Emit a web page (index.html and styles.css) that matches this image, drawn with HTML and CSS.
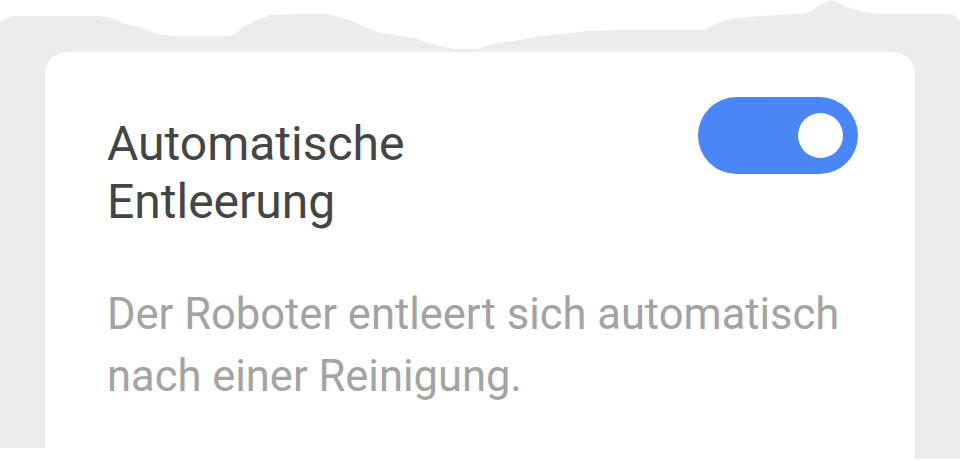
FILE: index.html
```html
<!DOCTYPE html>
<html lang="de">
<head>
<meta charset="utf-8">
<title>Automatische Entleerung</title>
<link rel="stylesheet" href="styles.css">
</head>
<body>
<div class="screen">
  <svg class="backdrop" width="960" height="461" viewBox="0 0 960 461" aria-hidden="true">
    <path d="M0,22 L5,19 L13,16 L100,16 L110,18 L125,24 L140,27 L155,33 L170,36 L230,36 L237,33 L242,27 L255,21 L270,15 L300,14 L325,14 L335,16 L350,20 L365,27 L380,33 L400,36 L415,38 L425,42 L440,46 L455,49 L478,49 L490,45 L505,42 L520,40 L535,37 L550,35 L570,33 L590,31 L620,30 L705,30 L720,22 L735,18 L760,16 L800,14 L812,11 L818,6 L826,2 L831,0 L837,2 L847,7 L860,11 L870,13 L878,14 L945,14 Q960,14 960,25 L960,459 L45,459 L45,448 L0,448 Z" fill="#ececec"/>
  </svg>
  <section class="card">
    <div class="row">
      <h2 class="title">Automatische<br>Entleerung</h2>
      <div class="toggle is-on" role="switch" aria-checked="true"><span class="knob"></span></div>
    </div>
    <p class="desc">Der Roboter entleert sich automatisch nach einer Reinigung.</p>
  </section>
</div>
</body>
</html>
```
FILE: styles.css
```css
html, body {
  margin: 0;
  padding: 0;
  background: #ffffff;
  overflow: hidden;
}

.screen {
  position: relative;
  width: 960px;
  height: 461px;
  padding: 52px 45px 0 45px;
  box-sizing: border-box;
  font-family: Roboto, "Liberation Sans", Arial, sans-serif;
}

.backdrop {
  position: absolute;
  left: 0;
  top: 0;
}

.card {
  position: relative;
  background: #ffffff;
  border-radius: 22px 22px 0 0;
  height: 409px;
  padding: 45px 57px 0 62px;
  box-sizing: border-box;
}

.row {
  display: flex;
  justify-content: space-between;
  align-items: flex-start;
}

.title {
  margin: 18px 0 0 0;
  font-size: 48px;
  line-height: 58px;
  font-weight: 400;
  color: #454545;
}

.toggle {
  width: 160px;
  height: 77px;
  border-radius: 39px;
  background: #4a86f5;
  display: flex;
  align-items: center;
  justify-content: flex-end;
  padding-right: 15px;
  box-sizing: border-box;
}

.knob {
  width: 45px;
  height: 45px;
  border-radius: 50%;
  background: #ffffff;
}

.desc {
  margin: 53px 0 0 0;
  font-size: 43.5px;
  line-height: 62px;
  color: #a3a3a3;
}
```
